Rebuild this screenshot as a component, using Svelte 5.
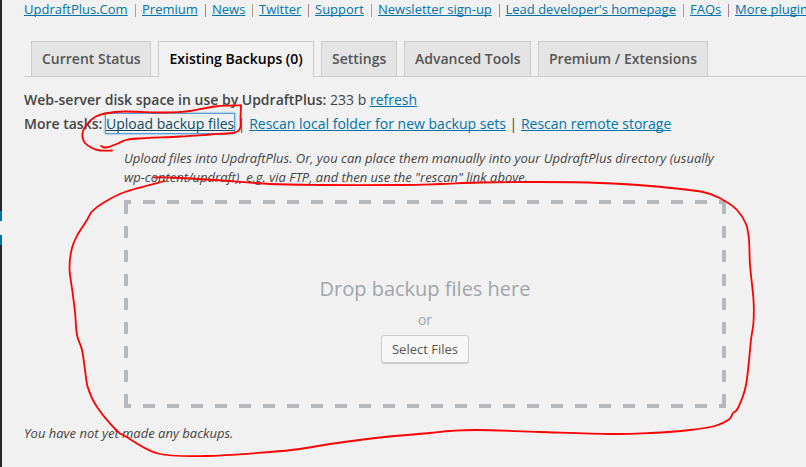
<script>
  const links = [
    ['UpdraftPlus.Com', 118],
    ['Premium', 70],
    ['News', 47],
    ['Twitter', 56],
    ['Support', 63],
    ['Newsletter sign-up', 127.5],
    ["Lead developer's homepage", 184.5],
    ['FAQs', 45],
    ['More plugins', 90]
  ];
  const tabs = [
    ['Current Status', 120],
    ['Existing Backups (0)', 156],
    ['Settings', 76],
    ['Advanced Tools', 127],
    ['Premium / Extensions', 170]
  ];

  // Freehand pen strokes, as points joined by a smooth curve
  const strokes = [
    [[101,146],[105,147.5],[110,146.5],[118,143.5],[126,140],[138,138.5],[180,136.5],[210,134.5],[232,133],[238,131],[240.5,127],[240.5,118],[241,105.5]],
    [[241,105.5],[232,105.5],[215,106.5],[190,111],[180,112],[160,112.5],[125,111.5],[105,113.5],[95,117],[88,123],[83,131],[82.5,137],[85,143],[92,148],[100,150.5],[112,150.5]],
    [[154,177.5],[170,177.5],[215,180],[270,184],[320,185],[400,185],[440,184],[480,182.5],[540,182],[600,183],[650,186],[703,192],[723,200],[737,210],[746,224],[749,240],[750,265],[753.5,300],[753.5,322],[751,340],[746,385],[738,408],[733,413],[729,419.5],[715,426],[690,430],[650,433],[610,434],[540,432],[478,430],[450,431],[430,433],[380,437.5],[330,444],[300,449],[270,452],[205,456],[158,453.5],[125,436],[117,431],[97,407],[88,388],[85,370],[82,350],[77,335],[75,312],[72.5,292],[69.5,268],[72,248],[78,234],[87,220],[92,211.5],[103,203],[125,192],[165,181]]
  ];
  const smooth = (p) => p.slice(1).reduce((d, c, i) => {
    const a = p[i], before = p[i - 1] ?? a, after = p[i + 2] ?? c;
    return `${d}C${a[0] + (c[0] - before[0]) / 6} ${a[1] + (c[1] - before[1]) / 6} ${c[0] - (after[0] - a[0]) / 6} ${c[1] - (after[1] - a[1]) / 6} ${c[0]} ${c[1]}`;
  }, `M${p[0][0]} ${p[0][1]}`);
</script>

<div class="page">
  <div class="rail"><i></i></div>
  <main>
    <nav class="links">
      {#each links as [label, width], i}
        <span class="item" style="width:{width}px"><a href="#top">{label}</a>{#if i < links.length - 1}<b></b>{/if}</span>
      {/each}
    </nav>
    <div class="tabs">
      {#each tabs as [label, width], i}
        <div class="tab" class:active={i === 1} style="width:{width}px">{label}</div>
      {/each}
    </div>
    <div class="row first"><strong>Web-server disk space in use by UpdraftPlus:</strong> <span>233 b</span> <a href="#refresh">refresh</a></div>
    <div class="row"><strong>More tasks:</strong> <a class="focus" href="#upload">Upload backup files</a> | <a href="#rescan">Rescan local folder for new backup sets</a> | <a href="#remote">Rescan remote storage</a></div>
    <p class="hint">Upload files into UpdraftPlus. Or, you can place them manually into your UpdraftPlus directory (usually<br />wp-content/updraft), e.g. via FTP, and then use the "rescan" link above.</p>
    <div class="drop">
      <div class="title">Drop backup files here</div>
      <div class="or">or</div>
      <button>Select Files</button>
    </div>
    <p class="none">You have not yet made any backups.</p>
  </main>
  <svg class="marks" width="806" height="467" viewBox="0 0 806 467">
    {#each strokes as points}
      <path d={smooth(points)} />
    {/each}
  </svg>
</div>

<style>
  .page { position: relative; display: flex; width: 806px; height: 467px; overflow: hidden; background: #f1f1f1; color: #444; font: 13px "Open Sans", sans-serif; white-space: nowrap; }
  .rail { width: 2px; height: 467px; flex: none; background: #23282d; }
  .rail i { display: block; width: 2px; height: 34px; margin-top: 211px; background: linear-gradient(#0073aa 10px, #f1f1f1 10px, #f1f1f1 24px, #0073aa 24px); }
  main { flex: none; width: 782px; margin-left: 22px; }
  a { color: #0073aa; text-decoration: underline; text-decoration-skip-ink: none; }
  .links { display: flex; height: 41px; line-height: 18px; }
  .item { display: flex; flex: none; }
  .item b { width: 1px; height: 13px; margin: 4px 0 0 7px; background: #aa8295; }
  .item:nth-child(odd) b { background: #bd9d7c; }
  .tabs { display: flex; gap: 7px; height: 36px; box-sizing: border-box; padding-left: 7px; border-bottom: 1px solid #ccc; }
  .tab { flex: none; height: 35px; box-sizing: border-box; border: 1px solid #ccc; border-bottom: 0; padding: 0 10px; line-height: 33px; font-size: 14px; font-weight: 600; background: #e4e4e4; color: #555; }
  .active { height: 36px; padding-left: 10.5px; color: #000; background: #f1f1f1; }
  .row { height: 24px; font-size: 14px; line-height: 24px; }
  .first { margin-top: 11px; }
  strong { font-weight: 600; }
  .focus { color: #124964; box-shadow: 0 0 0 1px #5b9dd9, 0 0 2px 1px rgba(30, 140, 190, .8); }
  .hint { margin: 13px 0 0 100px; height: 51px; line-height: 19px; font-style: italic; letter-spacing: -.008px; }
  .drop { width: 602px; height: 208px; box-sizing: border-box; margin-left: 100px; padding-top: 75px; display: flex; flex-direction: column; align-items: center; color: #a0a5aa;
    --c: #b4b9be;
    --h: linear-gradient(90deg, var(--c) 12px, transparent 12px);
    --v: linear-gradient(var(--c) 12px, transparent 12px);
    --s: linear-gradient(var(--c), var(--c));
    background:
      var(--h) -5px 0 / 24px 4px repeat-x, var(--h) -5px 100% / 24px 4px repeat-x,
      var(--v) 0 2px / 4px 24px repeat-y, var(--v) 100% 2px / 4px 24px repeat-y,
      var(--s) 0 0 / 4px 4px no-repeat, var(--s) 100% 0 / 4px 4px no-repeat,
      var(--s) 0 100% / 4px 4px no-repeat, var(--s) 100% 100% / 4px 4px no-repeat; }
  .title { font-size: 20px; line-height: 28px; }
  .or { margin-top: 6px; font-size: 14px; line-height: 22px; }
  button { margin-top: 4px; width: 88px; height: 28px; box-sizing: border-box; padding: 0; border: 1px solid #ccc; border-radius: 3px; background: #f7f7f7; box-shadow: 0 1px 0 #ccc; color: #555; font: 13px/26px "Open Sans", sans-serif; }
  .none { margin: 16px 0 0; line-height: 19px; font-style: italic; }
  .marks { position: absolute; inset: 0; fill: none; stroke: #f00; stroke-width: 1.8; stroke-linecap: round; stroke-linejoin: round; }
</style>
